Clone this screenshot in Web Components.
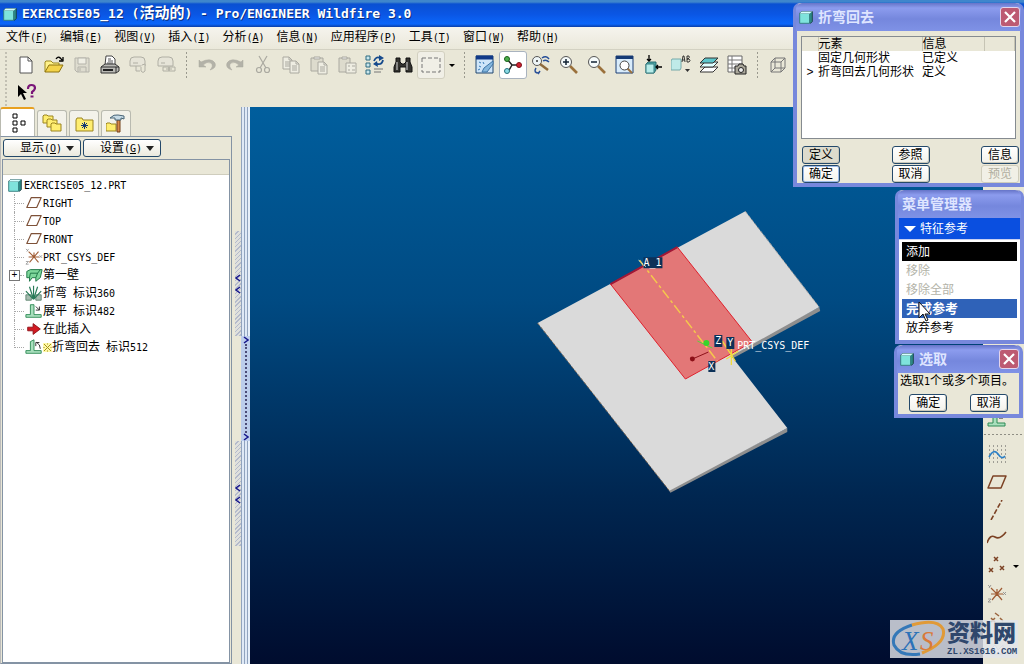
<!DOCTYPE html>
<html lang="zh-CN">
<head>
<meta charset="utf-8">
<title>EXERCISE05_12 (活动的) - Pro/ENGINEER Wildfire 3.0</title>
<style>
  :root {
    --face: #e9e7d7;
    --line: #8493a4;
    --dialog: #7788dc;
  }
  html, body { height: 100%; }
  body {
    margin: 0;
    overflow: hidden;
    background: var(--face);
    color: #000;
    font: 12px/18px "Liberation Sans", "Noto Sans CJK SC", sans-serif;
  }
</style>
</head>
<body>
<app-window></app-window>
<script>
const LATIN = `.l{font-family:"DejaVu Sans Mono","Noto Sans CJK SC",monospace;font-size:var(--latin,10px);white-space:pre}u{text-underline-offset:1px}`;
const RESET = `:host,*{box-sizing:border-box}button{font:inherit;color:inherit;margin:0;padding:0;border:0;background:none;white-space:nowrap}ul{list-style:none;margin:0;padding:0}`;

/* Wraps every half-width run in a span, and turns "_X" inside parentheses into an access key. */
function mix(text) {
  return text.replace(/[\x20-\x7e]+/g, run =>
    `<span class="l">${run.replace(/\(_(\w)\)/, '(<u>$1</u>)')}</span>`);
}

function define(name, render) {
  customElements.define(name, class extends HTMLElement {
    constructor() { super(); this.attachShadow({ mode: 'open' }); }
    connectedCallback() {
      this.shadowRoot.innerHTML = render(this);
    }
  });
}

const page = (x, y) => `<path d="M${x} ${y}h6l3 3v9h-9z" fill="#eeede2"/><path d="M${x+6} ${y}v3h3M${x+2} ${y+5}h5M${x+2} ${y+7}h5M${x+2} ${y+9}h5"/>`;
const folder = (x, y) => `<path d="M${x} ${y+9}v-7l1-1h3l1 1h5v7z" fill="#ffee70" stroke="#9b8420"/>`;
const cube = `<path d="M3 6l2-2h12v11l-2 2z" fill="#2c8c88" stroke="#153c40"/><path d="M3 6h11v11H3z" fill="#7fe3dc" stroke="#31797a"/><path d="M3 6l2-2h12l-3 2z" fill="#d6ffff"/>`;
const csys = `<path d="M10 10L4 4M10 10L5 16M10 10l5-6M10 10l5 6M10 10H4M10 10h6M10 10V5"/>`;

const ICONS = {
  part: cube,
  newfile: `<path d="M4 2h8l4 4v12H4z" fill="#fff" stroke="#555"/><path d="M12 2v4h4" stroke="#555"/>`,
  open: `<path d="M1 17V7l1-1h5l2 2h6v2" fill="#fff28a" stroke="#9d8820"/><path d="M1 17l4-7h14l-4 7z" fill="#f3d34a" stroke="#8e7410"/><path d="M12 4c2-3 4-2 6 1M19 2v4h-4" stroke="#000" stroke-width="1.3"/>`,
  save: `<g stroke="#b4b3aa"><path d="M3 3h14v14H5l-2-2z" fill="#dedccf"/><path d="M6 3h8v6H6z" fill="#efeee4"/><path d="M6 17v-5h8v5M8 13v3"/></g>`,
  print: `<path d="M5 10l1-9h6l3 3v6" fill="#fff" stroke="#444"/><path d="M8 4h3M8 6h5M7 8h6" stroke="#555"/><path d="M1 12l4-3h10l4 3v4l-3 2H1z" fill="#b9b9b4" stroke="#333"/><path d="M1 12h15v6M16 12h3" stroke="#333"/><path d="M3 15h10" stroke="#222" stroke-width="2"/>`,
  mail: `<g stroke="#b0afa4"><path d="M2 9V6q0-4 4-4h7q4 0 4 4v5H2M2 9v2M8 11v5h4" fill="#e6e4d8"/><path d="M14 10l3-1v7q-2 3-4 0v-4" fill="#e9e7d7"/><path d="M5 8h5"/></g>`,
  maillink: `<g stroke="#b0afa4"><path d="M2 9V6q0-4 4-4h7q4 0 4 4v5H2M2 9v2M5 8h4" fill="#e6e4d8"/><path d="M7 12h6v4H7zM13 12h6v4h-6zM10 14h6" fill="#e9e7d7"/></g>`,
  undo: `<path d="M2 5v7h7l-3-2q4-4 8-2 3 3-1 7 7-2 5-7-4-6-14-1z" fill="#b3b2a8" stroke="#aaa99f" stroke-width=".5"/>`,
  redo: `<path d="M18 5v7h-7l3-2q-4-4-8-2-3 3 1 7-7-2-5-7 4-6 14-1z" fill="#b3b2a8" stroke="#aaa99f" stroke-width=".5"/>`,
  cut: `<g stroke="#aaa9a0" stroke-width="1.2"><path d="M6 1l7 12M14 1L7 13"/><circle cx="6" cy="15" r="2.5"/><circle cx="14" cy="15" r="2.5"/></g>`,
  copy: `<g stroke="#aaa9a0">${page(2,2)}${page(9,6)}</g>`,
  paste: `<g stroke="#aaa9a0"><path d="M2 3h12v13H2z" fill="#dddbcd"/><path d="M5 4V2h6v2z" fill="#eee"/>${page(9,7)}</g>`,
  pastespecial: `<g stroke="#aaa9a0"><path d="M2 3h11v14H2z" fill="#dddbcd"/><path d="M5 4V2h5v2z" fill="#eee"/><path d="M9 8h10v10H9z" fill="#eeede2"/><path d="M11 11h2M11 15h2M15 11h3M15 15h3"/></g>`,
  regen: `<g stroke="#2d6a80" fill="#c9e6ec"><path d="M1 1h4v4H1zM1 8h4v4H1zM1 15h4v4H1z"/></g><path d="M9 6q2-5 6-3M18 5q-1 5-6 4" stroke="#164a8c" stroke-width="1.8"/><path d="M14 0l5 3-5 3zM12 6L8 9l5 3z" fill="#164a8c"/><path d="M9 14h9M9 17h7" stroke="#777"/>`,
  find: `<path d="M3 3h4v4l2 2h2l2-2V3h4v4l2 5v5h-6v-5H7v5H1v-5l2-5z" fill="#33332f" stroke="#111"/><path d="M4 7v8M14 7v8" stroke="#aaa" stroke-width="1.4"/>`,
  select: `<rect x="1" y="3" width="18" height="14" stroke="#777" stroke-dasharray="4 2"/>`,
  repaint: `<path d="M1 1h17v17H1z" fill="#cfe6fa" stroke="#21476f"/><path d="M1 2.500h17" stroke="#123a88" stroke-width="4"/><path d="M18 6L9 13l-2 4h5l6-8z" fill="#86b8de" stroke="#3f76a8"/><path d="M4 7l2 1M8 7l1 2M4 11l2 1M3 15l2-1" stroke="#397bb8"/>`,
  spin: `<path d="M4 4l5 6-4 7M9 10h7" stroke="#222" stroke-width="1.5"/><circle cx="4" cy="4" r="2.500" fill="#4cae4c" stroke="#176017"/><circle cx="4" cy="16" r="2.500" fill="#8adbe6" stroke="#246f7a"/><circle cx="16" cy="10" r="2.500" fill="#cf2030" stroke="#7c1018"/>`,
  orient: `<circle cx="6" cy="6" r="4.500" fill="#eef5f6" stroke="#555"/><circle cx="6" cy="6" r="1" fill="#333"/><path d="M9 9l8 6" stroke="#8e6a3c" stroke-width="2.500"/><path d="M11 3q4-3 7 1M12 6q3-2 6 1M5 13q-3 5 3 5M9 16l-2 3" stroke="#274e97" stroke-width="1.500"/>`,
  zoomin: `<path d="M11 11l7 7" stroke="#9b713c" stroke-width="2.600"/><circle cx="7" cy="7" r="5.500" fill="#f5fafa" stroke="#555"/><path d="M4 7h6M7 4v6" stroke="#123" stroke-width="1.500"/>`,
  zoomout: `<path d="M11 11l7 7" stroke="#9b713c" stroke-width="2.600"/><circle cx="7" cy="7" r="5.500" fill="#f5fafa" stroke="#555"/><path d="M4 7h6" stroke="#123" stroke-width="1.500"/>`,
  refit: `<path d="M1 1h17v17H1z" fill="#d9ecfb" stroke="#1d3f75"/><path d="M1 2.500h17" stroke="#153a74" stroke-width="3"/><path d="M12 13l5 5" stroke="#9b713c" stroke-width="2"/><circle cx="9.500" cy="10.500" r="4.500" fill="#fff" stroke="#444"/>`,
  reorient: `<path d="M3 9l2-2h8v8l-2 3H3z" fill="#4aa7a8" stroke="#2b6a6e"/><path d="M3 9h8v9H3z" fill="#b7ece9" stroke="#397f82"/><path d="M6 0v6M4 4l2 2 2-2M19 12h-6M15 10l-2 2 2 2" stroke="#000" stroke-width="1.300"/>`,
  views: `<path d="M0 6l1-2h9v9l-1 2H0z" fill="#bfeae8" stroke="#7aa"/><path d="M11 7l1-6h1l1 6M11.500 5h2M16 1h2q1 1.500-1 3h-1 2q2 1.500 0 3h-2z" stroke="#222" stroke-width=".9"/><path d="M14 14h5l-2.500 3z" fill="#333"/>`,
  layers: `<g stroke="#333"><path d="M1 17l5-5h13l-5 5z" fill="#fff"/><path d="M1 12l5-5h13l-5 5z" fill="#dff"/><path d="M1 8l5-5h13l-5 5z" fill="#5cc6cb"/></g>`,
  viewmgr: `<path d="M1 1h14v16H1z" fill="#fff" stroke="#666"/><path d="M1 5h14M1 9h14M1 13h14M5 1v16" stroke="#777"/><path d="M8 11h3l1-2h4l1 2h2v8H8z" fill="#aaa79a" stroke="#222"/><circle cx="14" cy="15" r="2.500" fill="#eee" stroke="#222"/>`,
  wire: `<path d="M3 7h10v10H3zM7 3h10v10H7zM3 7l4-4M13 7l4-4M3 17l4-4M13 17l4-4" stroke="#777"/>`,
  help: `<path d="M2 2v12l3-3 3 6 2-1-3-6h4z" fill="#000"/><path d="M12 6q0-4 3.500-4t3.500 3q0 2-3 4v2" stroke="#7a1678" stroke-width="2.200"/><path d="M14.500 13.500h3" stroke="#7a1678" stroke-width="2"/>`,
  tree: `<g stroke="#000" fill="#fff"><path d="M5 1h4v4H5zM5 8h4v4H5zM5 15h4v4H5zM13 8h4v4h-4z"/></g>`,
  folders: folder(1,0) + folder(5,4) + folder(9,8),
  favs: `<path d="M2 17V6l1-2h5l1 2h10v11z" fill="#ffee70" stroke="#9b8420"/><path d="M10.500 8v7M7 11.500h7M8 9l5 5M13 9l-5 5" stroke="#153a74"/>`,
  tools: folder(0,8) + `<path d="M11 6h3v12h-3z" fill="#d88a4c" stroke="#754018"/><path d="M4 4q4-4 8-3l6 1v3l-3-1v2H9V4z" fill="#c7dbe6" stroke="#486476"/>`,
  plane: `<path d="M2 15l5-11h11l-5 11z" stroke="#7e5138" stroke-width="1.300"/>`,
  csys: `<g stroke="#a05c34" stroke-width="1.200">${csys}</g><path d="M1 1l2 2M4 1L2 4M16 8l3 3M19 8l-3 3M1 15h3l-3 3h3" stroke="#888" stroke-width=".8"/>`,
  wall: `<path d="M2 6l4-2h13l-2 9-5 4v-4h-4l-3 4v-4H2z" fill="#7ed79b" stroke="#17713f"/><path d="M6 8h8l3-4M14 8l-2 5M5 13l1-5" stroke="#17713f"/>`,
  bend: `<path d="M1 12h6v6H1zM12 12h6v6h-6z" fill="#a7bdb0" stroke="#5f8570"/><path d="M9.500 17L1 8M9.500 17L5 3M9.500 17V2M9.500 17L14 3M9.500 17L18 8" stroke="#287a57" stroke-width="1.300"/>`,
  unbend: `<path d="M1 17v-3h5V3h4v11h8v3z" fill="#a9dfbd" stroke="#2d8a55"/><path d="M12 5l4 4M16 5v4h-4" stroke="#222"/>`,
  bendback: `<path d="M1 17v-3h5V4l4-2v12h8v3z" fill="#a9dfbd" stroke="#2d8a55"/><path d="M17 12q0-5-4-7M12 9V5h4" stroke="#222"/>`,
  insert: `<path d="M3 8h6V4l8 6-8 6v-4H3z" fill="#d21a22" stroke="#8c1016"/>`,
  sketch: `<path d="M2 2h17M2 6h17M2 10h17M2 14h17M2 18h17" stroke="#555" stroke-dasharray="1 3"/><path d="M2 13q5-9 9-3t7 2" stroke="#2a7fc6" stroke-width="1.600"/>`,
  rplane: `<path d="M1 16L6 4h13l-5 12z" stroke="#7c4224" stroke-width="1.500"/>`,
  axis: `<path d="M4 20L15 0" stroke="#7c4224" stroke-width="1.600" stroke-dasharray="5 2"/>`,
  curve: `<path d="M0 15q3-9 8-6t11-5" stroke="#7c4224" stroke-width="1.600"/>`,
  points: `<path d="M7 1l4 4M11 1L7 5M2 12l4 4M6 12l-4 4M13 10l4 4M17 10l-4 4" stroke="#7c4224" stroke-width="1.500"/>`,
  analysis: `<path d="M4 6l4 4M8 6l-4 4M8 1l4 3M13 6l3 3M12 12l4 4" stroke="#9b653f" stroke-width="1.500"/>`,
  annot: `<path d="M3 10l5-5 3 5 5-5v9H3z" fill="#fff" stroke="#bbb"/>`
};

define('ui-icon', el => `<style>:host{display:block;width:20px;height:20px;flex:none}svg{display:block;width:100%;height:100%}</style>
  <svg viewBox="0 0 20 20" fill="none" stroke-linejoin="round" aria-hidden="true">${ICONS[el.getAttribute('name')]}</svg>`);

define('title-bar', () => `<style>${RESET}${LATIN}
  :host{display:flex;align-items:center;gap:3px;height:27px;padding-left:1px;color:#fff;font-size:15px;font-weight:700;--latin:13px;white-space:nowrap;text-shadow:1px 1px #0a2f80;
    background:linear-gradient(#3f86cc 0,#3f86cc 2px,#0a50d2 4px,#0a56e4 14px,#0b66fa 24px,#0a3ea8 27px)}
  ui-icon{width:18px;height:18px} h1{font:inherit;margin:0}</style>
  <ui-icon name="part"></ui-icon><h1>${mix('EXERCISE05_12 (活动的) - Pro/ENGINEER Wildfire 3.0')}</h1>`);

define('menu-bar', () => `<style>${RESET}${LATIN}
  :host{display:block;height:23px;background:linear-gradient(#f5f4ee,#eae8da);border-bottom:1px solid #d3d1c2}
  nav{display:flex;gap:12px;padding:1px 6px}</style>
  <nav>${['文件(_F)','编辑(_E)','视图(_V)','插入(_I)','分析(_A)','信息(_N)','应用程序(_P)','工具(_T)','窗口(_W)','帮助(_H)'].map(m => `<button>${mix(m)}</button>`).join('')}</nav>`);

define('tool-bar', () => {
  const tool = n => {
    if (n === '|') return '<i class="grip"></i>';
    if (n === 'v') return '<button class="drop" aria-label="select options"></button>';
    const cls = n === 'spin' ? 'on' : n === 'select' ? 'soft' : '';
    return `<button class="${cls}" aria-label="${n}"><ui-icon name="${n}"></ui-icon></button>`;
  };
  const rows = ['newfile open save print mail maillink | undo redo cut copy paste pastespecial regen find select v | repaint spin orient zoomin zoomout refit reorient views layers viewmgr | wire', 'help'];
  return `<style>${RESET}
  :host{display:block;height:57px;background:var(--face);overflow:hidden}
  div{display:flex;align-items:center;height:30px}
  div+div{height:26px}
  button{display:flex;align-items:center;justify-content:center;width:28px;height:28px;border-radius:3px;flex:none}
  .on{background:#fff;border:1px solid #a9b3bf}
  .soft{background:#f0efe6;border:1px solid #d2d0c0}
  .drop{width:13px}
  .drop::after{content:"";border:3px solid transparent;border-top-color:#000;border-bottom:0}
  .grip{width:13px;height:26px;flex:none;background:radial-gradient(circle,#9a998e 1px,transparent 1px) center/13px 4px repeat-y}
  .grip:first-child{width:12px}
  </style>${rows.map(r => `<div><i class="grip"></i>${r.split(' ').map(tool).join('')}</div>`).join('')}`;
});

define('model-tree', () => {
  const rows = [['plane','RIGHT'],['plane','TOP'],['plane','FRONT'],['csys','PRT_CSYS_DEF'],['wall','第一壁','plus'],['bend','折弯 标识360'],['unbend','展平 标识482'],['insert','在此插入'],['bendback','折弯回去 标识512','new']];
  return `<style>${RESET}${LATIN}
  :host{display:block;flex:1;min-height:0;background:#fff;padding:1px 0 0 3px;white-space:nowrap}
  .root,li{display:flex;align-items:center;height:18px}
  ui-icon{width:18px;height:18px}
  .branch{width:18px;height:18px;display:flex;align-items:center;margin-right:1px}
  .branch::before{content:"";width:8px;height:18px;border-right:1px dotted #a8a8a8}
  .branch::after{content:"";flex:1;border-top:1px dotted #a8a8a8}
  li:last-child .branch::before{height:10px;align-self:flex-start}
  .branch.plus::before{content:"+";width:9px;height:9px;margin-left:3px;border:1px solid #777;font:10px/7px "Liberation Sans",sans-serif;text-align:center;color:#000}
  .new{width:9px;height:9px}
  </style>
  <div class="root"><ui-icon name="part"></ui-icon><span>${mix('EXERCISE05_12.PRT')}</span></div>
  <ul>${rows.map(([i, t, c]) => `<li><span class="branch ${c === 'plus' ? 'plus' : ''}"></span><ui-icon name="${i}"></ui-icon>${c === 'new' ? '<svg class="new" viewBox="0 0 9 9"><path d="M0 0h9v9H0z" fill="#fff9a8"/><path d="M1 1l7 7M8 1L1 8M4 1h1M4 8h1M1 4v1M8 4v1" stroke="#a3901c"/></svg>' : ''}<span>${mix(t)}</span></li>`).join('')}</ul>`;
});

define('side-panel', () => `<style>${RESET}${LATIN}
  :host{display:flex;flex-direction:column;width:232px;flex:none;background:var(--face)}
  .tabs{display:flex;gap:2px;height:29px;align-items:flex-end;flex:none}
  .tabs button{display:flex;align-items:center;justify-content:center;width:30px;height:26px;border:1px solid #b9bab0;border-bottom:0;border-radius:3px 3px 0 0;background:#f3f2ea}
  .tabs .on{width:35px;height:29px;background:#fff;border-top:2px solid #e8a020}
  .frame{flex:1;min-height:0;display:flex;flex-direction:column;border:1px solid var(--line);border-left-color:#bbb}
  .cmds{display:flex;gap:2px;padding:2px 2px 1px;flex:none}
  .cmds button{display:flex;align-items:center;justify-content:flex-end;gap:4px;width:78px;height:18px;padding-right:6px;border:1px solid #24496a;border-radius:3px;background:linear-gradient(#fff,#eceade)}
  .cmds button::after{content:"";border:4px solid transparent;border-top:5px solid #222;border-bottom:0}
  .list{flex:1;min-height:0;margin:1px 1px 0;border:1px solid var(--line);display:flex;flex-direction:column}
  .head{height:15px;flex:none;background:var(--face);border-bottom:1px solid #cfcdbd}
  </style>
  <div class="tabs"><button class="on" aria-label="tree"><ui-icon name="tree"></ui-icon></button><button aria-label="folders"><ui-icon name="folders"></ui-icon></button><button aria-label="favourites"><ui-icon name="favs"></ui-icon></button><button aria-label="tools"><ui-icon name="tools"></ui-icon></button></div>
  <div class="frame"><div class="cmds"><button><span>${mix('显示(_O)')}</span></button><button><span>${mix('设置(_G)')}</span></button></div>
  <div class="list"><div class="head"></div><model-tree></model-tree></div></div>`);

define('split-bars', () => {
  const chev = d => `<svg viewBox="0 0 6 8"><path d="${d}" fill="none" stroke="#16168c" stroke-width="1.500"/></svg>`;
  const left = chev('M5 1L1 4l4 3');
  const right = chev('M1 1l4 3-4 3');
  return `<style>${RESET}
  :host{display:flex;flex:none}
  div{display:flex;flex-direction:column;align-items:center;justify-content:center;padding-top:6px}
  .gutter{width:9px;gap:105px;background:var(--face);align-items:flex-end}
  .grip{display:flex;flex-direction:column;align-items:center;justify-content:center;gap:4px;width:6px;height:105px;background:repeating-linear-gradient(135deg,#dfe0dc 0 2px,#b4bacb 2px 3px)}
  svg{width:6px;height:8px;display:block}
  .bar{width:9px;background:linear-gradient(90deg,#90a3be 0 1px,#dfe9f6 1px 3px,#90a3be 3px 4px,#dfe9f6 4px 6px,#90a3be 6px 7px,#e6effa 7px)}
  .mid{display:flex;flex-direction:column;align-items:center;width:9px;height:105px;background:#bccdec}
  .mid::before{content:"";order:1;flex:1;border-left:2px dotted #4c4c78}
  .mid svg:last-child{order:2}
  </style><div class="gutter"><span class="grip">${left}${left}</span><span class="grip">${left}${left}</span></div>
  <div class="bar"><span class="mid">${right}${right}</span></div>`;
});

define('model-view', () => `<style>
  :host{display:block;flex:1;min-width:0;background:linear-gradient(#005e9d,#004a82 35%,#002650 70%,#000c2e)}
  svg{display:block;width:100%;height:100%}
  text{font:10px "DejaVu Sans Mono",monospace;fill:#fff}</style>
  <svg viewBox="249 107 734 557" role="img" aria-label="sheet metal model">
    <path d="M819 307l1 4-87 47-3-4zM787 428v4l-117 61-2-3z" fill="#8e8e8e"/>
    <path d="M537 323L745 211l74 96-88 49 56 72-118 63z" fill="#dadada"/>
    <path d="M537 323l132 168" stroke="#7f6a55" stroke-dasharray="3 2" fill="none"/>
    <path d="M745 211l74 96" stroke="#999" stroke-dasharray="3 2" fill="none"/>
    <path d="M610 284l67-37 75 95-67 37z" fill="#e37777" stroke="#e0202c"/>
    <path d="M610 284l67-37" stroke="#a01836" stroke-width="2"/>
    <path d="M639 260l78 101" stroke="#f5c84c" stroke-width="1.500" stroke-dasharray="10 3 3 3"/>
    <path d="M722 341l13 20M738 351l-12 8M731 348v17" stroke="#f1dc3c" stroke-width="1.300"/>
    <path d="M692 359l16-7" stroke="#8c1018"/><circle cx="692" cy="359" r="2.500" fill="#8c1018"/>
    <path d="M697 341l15 7" stroke="#5bd43b"/><circle cx="706" cy="343" r="3" fill="#37d52c"/>
    <path d="M643 257h19v11h-19zM714 335h8v12h-8zM726 337h8v12h-8zM708 361h7v11h-7z" fill="#0c3158"/>
    <path d="M638 260l9 8" stroke="#b6d8c8" stroke-dasharray="2 2"/>
    <text x="643" y="266">A_1</text><text x="715" y="344">Z</text><text x="727" y="346">Y</text><text x="708" y="370">X</text>
    <text x="737" y="349">PRT_CSYS_DEF</text>
  </svg>`);

define('feature-bar', () => `<style>${RESET}
  :host{display:flex;flex-direction:column;justify-content:flex-end;width:41px;flex:none;background:var(--face);overflow:hidden}
  button{display:flex;align-items:center;gap:6px;height:28px;padding-left:4px;flex:none}
  hr{width:100%;height:7px;margin:0;border:0;flex:none;background:radial-gradient(circle,#8f8e84 1px,transparent 1px) 0 0/4px 3px repeat-x}
  .drop::after{content:"";border:3px solid transparent;border-top-color:#000;border-bottom:0}
  </style><button aria-label="unbend"><ui-icon name="unbend"></ui-icon></button><hr>
  ${['sketch','rplane','axis','curve','points','csys','analysis','annot'].map(n => `<button class="${n === 'points' ? 'drop' : ''}" aria-label="${n}"><ui-icon name="${n}"></ui-icon></button>`).join('')}`);

define('push-button', el => `<style>${RESET}
  :host{display:block}
  button{display:block;width:38px;height:18px;line-height:16px;border:1px solid #24496a;border-radius:3px;background:linear-gradient(#fff,#f3f2ea);box-shadow:inset -1px -1px #c9c8bb}
  .pressed{background:#dddbcd}
  .main{box-shadow:inset 0 0 0 1px #9dbbe8}
  button:disabled{border-color:#cfcdbb;color:#b0aea0;background:#f1f0e6;box-shadow:none}
  </style><button class="${el.getAttribute('kind') || ''}" ${el.hasAttribute('disabled') ? 'disabled' : ''}><slot></slot></button>`);

define('tool-dialog', el => `<style>${RESET}
  :host{display:block;border:solid var(--dialog);border-width:0 4px 4px;border-radius:7px 7px 0 0;background:var(--face)}
  header{display:flex;align-items:center;height:28px;gap:3px;padding:0 1px;margin:0 -1px;color:#dfe5ff;background:linear-gradient(#6674c8,#8c9cee 5px,#7587dd 16px,#7f92e6);border-radius:6px 6px 0 0}
  h2{flex:1;margin:0;font-size:14px;line-height:20px;font-weight:700}
  h2:first-child{padding-left:3px}
  ui-icon{width:18px;height:18px}
  button{width:20px;height:20px;border:1px solid #e3d5ec;border-radius:3px;background:#bd5a72;display:grid;place-items:center}
  svg{width:12px;height:12px}
  </style><header>${el.hasAttribute('closable') ? '<ui-icon name="part"></ui-icon>' : ''}<h2>${el.getAttribute('heading')}</h2>${el.hasAttribute('closable') ? '<button aria-label="close"><svg viewBox="0 0 12 12"><path d="M1 1l10 10M11 1L1 11" stroke="#fff" stroke-width="2.200"/></svg></button>' : ''}</header><slot></slot>`);

define('element-dialog', () => `<style>${RESET}
  :host{display:block}
  .box{margin:5px 4px 0;height:103px;border:1px solid #858b90;background:#fff}
  table{border-collapse:collapse;width:100%;table-layout:fixed;line-height:14px}
  td,th{padding:0;font-weight:400;text-align:left;white-space:nowrap}
  th{background:var(--face);border-right:1px solid #c6c4b4}
  td:first-child{text-align:center}
  .grid{display:grid;grid-template-columns:repeat(3,38px);justify-content:space-between;gap:1px;padding:7px 1px 0 5px}
  </style><tool-dialog heading="折弯回去" closable>
  <div class="box"><table><colgroup><col style="width:16px"><col style="width:104px"><col style="width:62px"><col></colgroup>
  <thead><tr><th></th><th>元素</th><th>信息</th><th></th></tr></thead>
  <tbody><tr><td></td><td>固定几何形状</td><td>已定义</td><td></td></tr><tr><td>&gt;</td><td>折弯回去几何形状</td><td>定义</td><td></td></tr></tbody></table></div>
  <div class="grid"><push-button kind="pressed">定义</push-button><push-button>参照</push-button><push-button>信息</push-button><push-button kind="main">确定</push-button><push-button>取消</push-button><push-button disabled>预览</push-button></div>
  </tool-dialog>`);

define('menu-manager', () => `<style>${RESET}
  :host{display:block}
  .cap{display:flex;align-items:center;gap:4px;width:100%;height:21px;padding-left:5px;color:#fff;background:#0a4fe0}
  .cap::before{content:"";border:6px solid transparent;border-top-color:#fff;border-bottom:0}
  .body{background:#fff;padding:2px 3px 3px;border-top:1px solid #c8d0f2}
  li button{display:block;width:100%;height:19px;padding-left:4px;text-align:left;line-height:18px}
  button:disabled{color:#b3b3a8}
  .add{background:#000;color:#fff}.done{background:#2f62b8;color:#fff;font-weight:700;font-size:13px}
  svg{position:absolute;left:23px;top:111px;width:14px;height:22px}
  </style><tool-dialog heading="菜单管理器"><button class="cap">特征参考</button><div class="body"><ul>
  <li><button class="add">添加</button></li><li><button disabled>移除</button></li><li><button disabled>移除全部</button></li><li><button class="done">完成参考</button></li><li><button>放弃参考</button></li></ul></div></tool-dialog>
  <svg viewBox="0 0 14 22" aria-hidden="true"><path d="M1 1v16l4-4 3 7 2-1-3-6h5z" fill="#fff" stroke="#111"/></svg>`);

define('select-dialog', () => `<style>${RESET}${LATIN}
  :host{display:block}
  p{margin:0;padding-left:2px;line-height:16px;white-space:nowrap}
  .row{display:flex;justify-content:space-around;padding:4px 0 2px}
  </style><tool-dialog heading="选取" closable><p>${mix('选取1个或多个项目。')}</p><div class="row"><push-button>确定</push-button><push-button>取消</push-button></div></tool-dialog>`);

define('site-mark', () => `<style>
  :host{display:flex;align-items:center;width:128px;height:38px;background:rgba(226,228,234,.82);color:#2f476c}
  svg{width:57px;height:38px;flex:none}
  text{font:italic 27px "Liberation Serif",serif}
  div{display:flex;flex-direction:column}
  b{font-size:23px;line-height:27px;font-weight:900}
  small{font:700 9px/11px "Liberation Mono",monospace}
  </style><svg viewBox="0 0 57 38" fill="none"><path d="M22 5Q0 12 4 25q6 12 26 9" stroke="#3478b8" stroke-width="3"/><path d="M22 5q25-7 31 4 4 14-21 24" stroke="#e09a38" stroke-width="3"/><text x="12" y="30" fill="#2c72b8">X</text><text x="30" y="30" fill="#d9793a">S</text></svg>
  <div><b>资料网</b><small>ZL.XS1616.COM</small></div>`);

define('app-window', () => `<style>
  :host{display:flex;flex-direction:column;height:100vh;position:relative;overflow:hidden}
  main{display:flex;flex:1;min-height:0}
  element-dialog,menu-manager,select-dialog,site-mark{position:absolute}
  element-dialog{right:0;top:3px;width:231px}
  menu-manager{right:0;top:190px;width:129px}
  select-dialog{right:1px;top:345px;width:129px}
  site-mark{right:6px;bottom:6px}
  </style><title-bar></title-bar><menu-bar></menu-bar><tool-bar></tool-bar>
  <main><side-panel></side-panel><split-bars></split-bars><model-view></model-view><feature-bar></feature-bar></main>
  <element-dialog></element-dialog><menu-manager></menu-manager><select-dialog></select-dialog><site-mark></site-mark>`);
</script>
</body>
</html>
